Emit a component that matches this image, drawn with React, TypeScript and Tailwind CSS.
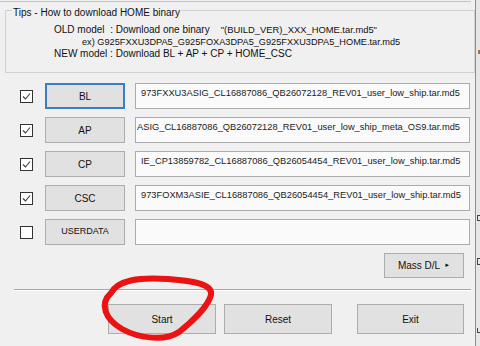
import React from 'react'

const font = { fontFamily: '"Liberation Sans", Arial, sans-serif' }

interface Row {
  label: string
  checked: boolean
  path: string
  focused?: boolean
  shift?: string
}

const rows: Row[] = [
  { label: 'BL', checked: true, focused: true, path: '973FXXU3ASIG_CL16887086_QB26072128_REV01_user_low_ship.tar.md5' },
  { label: 'AP', checked: true, shift: 'ml-[-4px]', path: 'ASIG_CL16887086_QB26072128_REV01_user_low_ship_meta_OS9.tar.md5' },
  { label: 'CP', checked: true, path: 'IE_CP13859782_CL16887086_QB26054454_REV01_user_low_ship.tar.md5' },
  { label: 'CSC', checked: true, path: '973FOXM3ASIE_CL16887086_QB26054454_REV01_user_low_ship.tar.md5' },
  { label: 'USERDATA', checked: false, path: '' },
]

function CheckBox({ checked }: { checked: boolean }) {
  return (
    <div className="w-[13px] h-[13px] border border-[#333333] bg-white flex items-center justify-center">
      {checked && (
        <svg width="9" height="9" viewBox="0 0 9 9">
          <path d="M1 4.5 L3.5 7 L8 1.5" fill="none" stroke="#3a3a3a" strokeWidth="1.1" />
        </svg>
      )}
    </div>
  )
}

function FileRow({ row }: { row: Row }) {
  return (
    <div className="flex items-center h-[26px]">
      <div className="w-[20px]" />
      <CheckBox checked={row.checked} />
      <div className="w-[12px]" />
      <button
        className={`w-[80px] h-[26px] bg-[#e1e1e1] text-[#111] flex items-center justify-center ${
          row.focused ? 'border-2 border-[#3b7ec2]' : 'border border-[#adadad]'
        } ${row.label === 'USERDATA' ? 'text-[9px]' : 'text-[10px]'}`}
      >
        {row.label}
      </button>
      <div className="w-[10px]" />
      <div className="w-[335px] h-[26px] border border-[#acacac] bg-[#fafafa] overflow-hidden pl-[5px] pt-[3px]">
        <div className={`whitespace-nowrap text-[9.3px] leading-[12px] text-[#1a1a1a] ${row.shift ?? ''}`}>
          {row.path}
        </div>
      </div>
    </div>
  )
}

export default function App() {
  return (
    <div className="w-[480px] h-[346px] bg-[#f0f0f0] relative overflow-hidden flex" style={font}>
      <div className="w-[476px] h-full border-r border-[#8e8e8e] flex flex-col">
        <div className="h-[2px] border-b border-[#c4c4c4] mr-[4px]" />

        {/* tips group */}
        <div className="relative ml-[5px] mt-[8px] h-[63px] border border-[#d2d2d2] pt-[13px]">
          <span className="absolute left-[6px] top-[-4px] bg-[#f0f0f0] px-[1px] text-[10px] leading-[12px] text-[#111]">
            Tips - How to download HOME binary
          </span>
          <div className="text-[10px] leading-[12px] text-[#111] whitespace-nowrap">
            <div className="pl-[48px]">
              OLD model&nbsp; : Download one binary&nbsp;&nbsp;&nbsp; <span className="text-[9.4px]">"(BUILD_VER)_XXX_HOME.tar.md5"</span>
            </div>
            <div className="pl-[76px] text-[9.2px]">ex) G925FXXU3DPA5_G925FOXA3DPA5_G925FXXU3DPA5_HOME.tar.md5</div>
            <div className="pl-[48px]">NEW model : Download BL + AP + CP + HOME_CSC</div>
          </div>
        </div>

        {/* file rows */}
        <div className="mt-[10px] flex flex-col gap-[8px]">
          {rows.map((r) => (
            <FileRow key={r.label} row={r} />
          ))}
        </div>

        <div className="flex justify-end mt-[8px] pr-[11px]">
          <button className="w-[80px] h-[25px] bg-[#e1e1e1] border border-[#adadad] text-[10px] text-[#111] flex items-center justify-center gap-[4px]">
            Mass D/L <span className="text-[6px]">►</span>
          </button>
        </div>

        <div className="mt-[11px] ml-[14px] mr-[4px] h-[2px] border-t border-[#a8a8a8] border-b border-b-white" />

        <div className="mt-[13px] flex text-[10px] text-[#111]">
          <div className="w-[108px]" />
          <button className="w-[108px] h-[30px] bg-[#e1e1e1] border border-[#adadad]">Start</button>
          <div className="w-[8px]" />
          <button className="w-[108px] h-[30px] bg-[#e1e1e1] border border-[#adadad]">Reset</button>
          <div className="w-[25px]" />
          <button className="w-[107px] h-[30px] bg-[#e1e1e1] border border-[#adadad]">Exit</button>
        </div>
      </div>

      {/* sliver of the window behind */}
      <div className="w-[4px] h-full bg-[#e6e6e6] flex flex-col">
        <div className="mt-[50px] ml-[2px] w-[2px] h-[4px] bg-[#a0704a]" />
        <div className="mt-[161px] ml-[1px] w-[3px] h-[6px] border-l border-t border-b border-[#444]" />
        <div className="mt-[37px] ml-[1px] w-[3px] h-[7px] border-l border-t border-b border-[#444]" />
        <div className="mt-[63px] ml-[1px] w-[3px] h-[5px] border-l border-b border-[#444]" />
      </div>

      {/* hand drawn red circle */}
      <svg className="absolute inset-0 pointer-events-none" width="480" height="346" viewBox="0 0 480 346">
        <path
          d="M111 293 C118 280, 138 277, 168 279 C194 281, 213 284, 211 295 C208 306, 193 321, 179 332 C166 341, 140 339, 122 329 C105 319, 99 304, 111 293 Z"
          fill="none"
          stroke="#ec1212"
          strokeWidth="6"
          strokeLinejoin="round"
        />
      </svg>
    </div>
  )
}
